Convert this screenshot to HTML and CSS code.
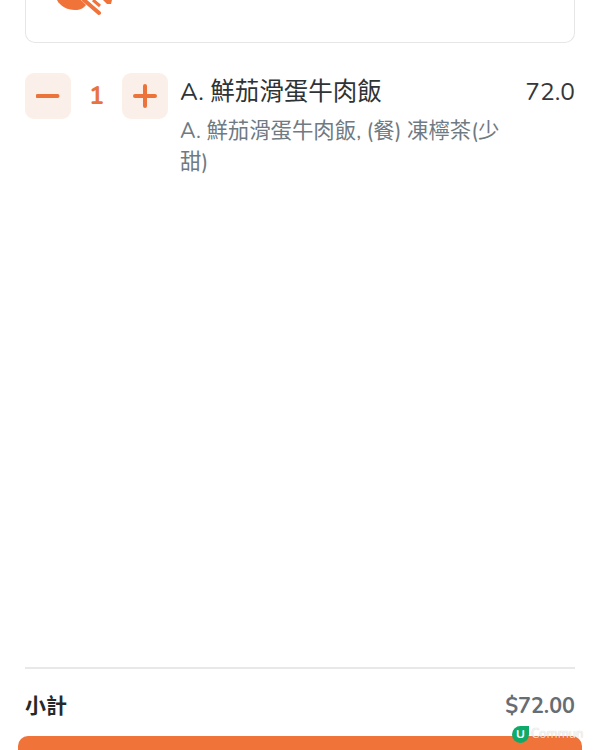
FILE: index.html
```html
<!DOCTYPE html>
<html lang="zh-Hant">
<head>
<meta charset="utf-8">
<title>購物車</title>
<link rel="stylesheet" href="styles.css">
</head>
<body>
<main class="page">
  <section class="card">
    <svg class="card-icon" width="56" height="18" viewBox="0 0 56 18" aria-hidden="true">
      <path d="M0 0 C3 6 10 10 18 10 C23 10 27 8 29 5 L24 0 Z" fill="#f0733a"/>
      <path d="M27 0 L42 13" stroke="#f0733a" stroke-width="4" stroke-linecap="round" fill="none"/>
      <path d="M36 0 L43 6" stroke="#f0733a" stroke-width="3" fill="none"/>
      <path d="M46 0 L50 4 L54 4 L55 0 Z" fill="#f0733a"/>
    </svg>
  </section>
  <section class="item">
    <div class="qty">
      <button class="qty-btn" type="button" aria-label="減少">
        <svg width="24" height="24" viewBox="0 0 24 24"><path d="M1.500 12H21.500" class="qty-stroke"/></svg>
      </button>
      <span class="qty-num">1</span>
      <button class="qty-btn" type="button" aria-label="增加">
        <svg width="24" height="24" viewBox="0 0 24 24"><path d="M2 12H22M12 2V22" class="qty-stroke"/></svg>
      </button>
    </div>
    <div class="item-body">
      <div class="item-name">A. 鮮茄滑蛋牛肉飯</div>
      <div class="item-desc">A. 鮮茄滑蛋牛肉飯, (餐) 凍檸茶(少甜)</div>
    </div>
    <div class="item-price">72.0</div>
  </section>
  <footer class="summary">
    <div class="summary-row">
      <span class="summary-label">小計</span>
      <span class="summary-value">$72.00</span>
    </div>
    <div class="checkout"></div>
  </footer>
  <div class="watermark">
    <span class="wm-badge">U</span><span class="wm-text">Commun</span>
  </div>
</main>
</body>
</html>
```

FILE: styles.css
```css
* { box-sizing: border-box; }
html, body { margin: 0; padding: 0; background: #fff; }
body { font-family: "Nunito", Lato, "Noto Sans CJK TC", sans-serif; }
.page {
  position: relative;
  width: 600px;
  height: 750px;
  overflow: hidden;
  display: flex;
  flex-direction: column;
  padding: 0 25px;
}
.card {
  height: 43px;
  border: 1.5px solid #e6e6e6;
  border-top: 0;
  border-radius: 0 0 10px 10px;
  padding-left: 31px;
}
.card-icon { display: block; }
.item {
  display: flex;
  align-items: flex-start;
  margin-top: 30px;
}
.qty { display: flex; align-items: center; width: 143px; flex: none; }
.qty-btn {
  width: 46px;
  height: 46px;
  flex: none;
  padding: 0;
  border: 0;
  border-radius: 9px;
  background: #fbf0e9;
  display: flex;
  align-items: center;
  justify-content: center;
}
.qty-stroke { stroke: #ec7339; stroke-width: 4; stroke-linecap: round; fill: none; }
.qty-num {
  flex: 1;
  text-align: center;
  color: #e8733c;
  font-size: 25px;
  font-weight: 700;
}
.item-body { width: 330px; margin-left: 13px; }
.item-name { margin-top: 2px; margin-left: -1px; font-size: 24.5px; line-height: 34px; color: #2e3336; }
.item-desc { margin-top: 7px; margin-left: -1px; font-size: 21.4px; line-height: 31px; color: #6f7a82; }
.item-price { margin-top: 2px; margin-left: auto; font-size: 24.5px; line-height: 34px; color: #33383b; }
.summary { margin-top: auto; }
.summary-row {
  display: flex;
  justify-content: space-between;
  align-items: center;
  height: 69px;
  padding-top: 6px;
  border-top: 2px solid #e8e8e8;
}
.summary-label { font-size: 21px; font-weight: 700; color: #26292b; position: relative; top: -1px; }
.summary-value { font-size: 21.5px; font-weight: 700; color: #666d73; }
.checkout {
  margin: 0 -7px;
  height: 14px;
  background: #f0733a;
  border-radius: 10px 10px 0 0;
}
.watermark {
  position: absolute;
  left: 512px;
  top: 726px;
  display: flex;
  align-items: flex-start;
  gap: 2px;
}
.wm-badge {
  width: 17px;
  height: 17px;
  background: #0fa968;
  color: #fff;
  font-size: 12px;
  font-weight: 700;
  text-align: center;
  line-height: 17px;
  border-radius: 50% 0 50% 50%;
}
.wm-text {
  font-size: 13px;
  line-height: 16px;
  color: rgba(255, 255, 255, .8);
  text-shadow: 0 0 1px rgba(0, 0, 0, .25);
}
```
